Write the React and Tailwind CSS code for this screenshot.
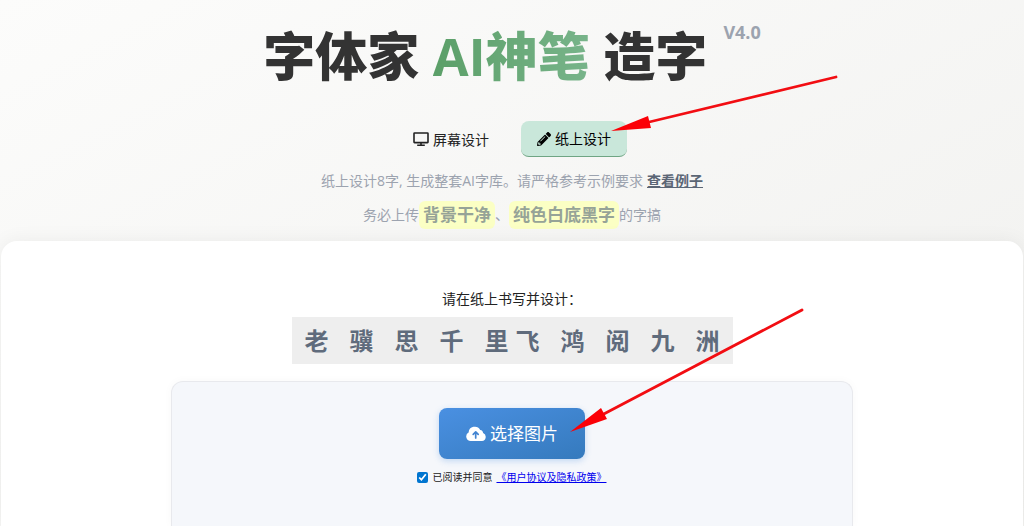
import React, { useState } from 'react';
import { FaPencilAlt } from 'react-icons/fa';

const DesktopIcon = ({ className }) => (
  <svg className={className} viewBox="0 0 16 16" fill="none" stroke="currentColor" strokeWidth="1.6" aria-hidden="true">
    <rect x="1" y="2" width="14" height="9.6" rx="0.5" />
    <path d="M8 11.6V14M4.2 14.2H11.8" />
  </svg>
);

const PencilIcon = () => <FaPencilAlt className="size-[14px]" />;

// filled cloud with the arrow cut out
const CloudIcon = ({ className }) => (
  <svg className={className} viewBox="0 0 20 20" aria-hidden="true">
    <path
      fill="currentColor"
      d="M4.6 17A4.6 4.6 0 0 1 2.6 8.4A6.2 6.2 0 0 1 14.2 5.9A3.4 3.4 0 0 1 17.1 9.1A4.1 4.1 0 0 1 16 17Z"
    />
    <path
      fill="none"
      stroke="#4284d1"
      strokeWidth="1.7"
      strokeLinecap="round"
      strokeLinejoin="round"
      d="M9.7 14V8.2M7.2 10.4L9.7 7.9L12.2 10.4"
    />
  </svg>
);

const tabs = [
  { id: 'screen', label: '屏幕设计', icon: <DesktopIcon className="size-4" /> },
  { id: 'paper', label: '纸上设计', icon: <PencilIcon /> },
];

const charGroups = [['老'], ['骥'], ['思'], ['千'], ['里', '飞'], ['鸿'], ['阅'], ['九'], ['洲']];

const Highlight = ({ children }) => (
  <strong className="rounded-md bg-[#fbffc4] px-1 text-[17px] leading-7 font-bold text-[#96a397]">
    {children}
  </strong>
);

const Arrows = () => (
  <svg
    className="pointer-events-none absolute top-0 left-1/2 -translate-x-1/2"
    width="1024"
    height="526"
    viewBox="0 0 1024 526"
    aria-hidden="true"
  >
    <g stroke="#f20d12" strokeWidth="2.8" strokeLinecap="round">
      <path d="M836 77L645 123" />
      <path d="M802 310L600 416" />
    </g>
    <g fill="#fb0007">
      <path d="M611 131L648 116L651 128Z" />
      <path d="M570 432L601 408L607 419Z" />
    </g>
  </svg>
);

const App = () => {
  const [activeTab, setActiveTab] = useState('paper');
  const [agreed, setAgreed] = useState(true);

  return (
    <div className="relative flex min-h-screen flex-col overflow-hidden bg-linear-to-br from-[#fcfcfb] to-[#f0f0ee] font-['Open_Sans','Noto_Sans_CJK_SC',sans-serif] text-[#222]">
      <header className="flex flex-col items-center pt-5">
        <div className="flex items-start justify-center gap-4">
          <h1 className="text-[52px] leading-[72px] font-black whitespace-pre text-[#333]">
            字体家{' '}
            <span className="bg-linear-to-r from-[#5b9f68] to-[#78b48a] bg-clip-text text-transparent">
              <span className="font-bold">AI</span>神笔
            </span>{' '}
            造字
          </h1>
          <span className="text-lg leading-6 font-bold text-[#9ca3af]">V4.0</span>
        </div>

        <nav className="mt-[29px] flex gap-4">
          {tabs.map(({ id, label, icon }) => (
            <button
              key={id}
              type="button"
              onClick={() => setActiveTab(id)}
              className={`flex h-9 items-center gap-1 rounded-lg px-4 text-[14px] ${
                activeTab === id
                  ? 'border-b border-[#6fa584] bg-[#c9e7da] text-black'
                  : 'text-[#222]'
              }`}
            >
              {icon}
              {label}
            </button>
          ))}
        </nav>

        <p className="mt-3 text-[14px] leading-6 text-[#9ca3af]">
          纸上设计8字, 生成整套AI字库。请严格参考示例要求
          <a href="#examples" className="ml-1 font-bold text-[#5b6675] underline">
            查看例子
          </a>
        </p>
        <p className="mt-2 flex items-center text-[14px] leading-7 text-[#9ca3af]">
          务必上传
          <Highlight>背景干净</Highlight>、
          <Highlight>纯色白底黑字</Highlight>
          的字搞
        </p>
      </header>

      <main className="mx-px mt-3 flex flex-1 flex-col items-center rounded-t-2xl bg-white pt-12 shadow-[0_0_20px_rgba(0,0,0,0.06)]">
        <p className="text-[14px] leading-5">请在纸上书写并设计：</p>
        <div className="mt-2 flex gap-[21px] bg-[#eeeeee] px-[13px] text-2xl leading-[47px] font-bold text-[#5f6b7c]">
          {charGroups.map((group) => (
            <span key={group[0]} className="flex gap-[7px]">
              {group.map((char) => (
                <span key={char}>{char}</span>
              ))}
            </span>
          ))}
        </div>

        <section className="mt-[17px] flex w-2/3 flex-1 flex-col items-center rounded-t-xl border border-b-0 border-[#e8e9ed] bg-[#f5f7fb] pt-[26px] shadow-[0_0_10px_rgba(0,0,0,0.03)]">
          <button
            type="button"
            className="flex h-[51px] items-center gap-1 rounded-lg bg-linear-to-br from-[#4a90e2] to-[#357abd] px-[27px] text-[17px] text-white shadow-[0_2px_6px_rgba(74,144,226,0.3)]"
          >
            <CloudIcon className="size-5" />
            选择图片
          </button>
          <div className="mt-[10px] flex items-center text-[10px] leading-4">
            <input
              id="agree"
              type="checkbox"
              checked={agreed}
              onChange={(e) => setAgreed(e.target.checked)}
              className="mr-1 size-[11px] accent-[#0075d0]"
            />
            <label htmlFor="agree">已阅读并同意</label>
            <a href="#policy" className="ml-1 text-[#0000ee] underline">
              《用户协议及隐私政策》
            </a>
          </div>
        </section>
      </main>

      <Arrows />
    </div>
  );
};

export default App;
